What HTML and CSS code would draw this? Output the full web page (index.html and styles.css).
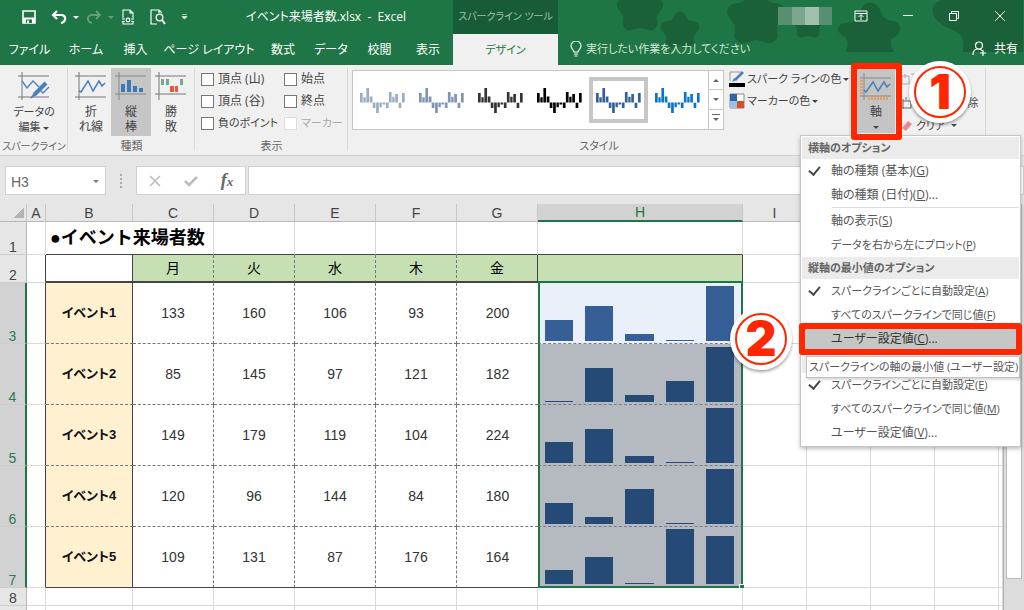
FILE: index.html
```html
<!DOCTYPE html>
<html lang="ja">
<head>
<meta charset="utf-8">
<title>イベント来場者数.xlsx - Excel</title>
<link rel="stylesheet" href="styles.css">
</head>
<body>
<svg class="defs" width="0" height="0" aria-hidden="true">
  <symbol id="star" viewBox="-50 -50 100 100"><path d="M0-34 14-14 34-10 20 8 22 28 0 22-22 28-20 8-34-10-14-14Z" fill="currentColor" stroke="currentColor" stroke-width="28" stroke-linejoin="round"/></symbol>
  <symbol id="winloss" viewBox="0 0 134 74"><path fill="currentColor" d="M0 15h8v28H0zM10 27h7v16h-7zM19 0h8v43h-8zM29 25h8v18h-8zM38 43h8v16h-8zM48 43h8v31h-8zM58 43h7v14h-7zM67 43h8v6h-8zM77 43h8v16h-8zM86 12h8v31h-8zM96 26h7v17h-7zM105 18h8v25h-8zM115 44h8v15h-8zM125 15h8v28h-8z"/></symbol>
</svg>
<div class="app">
  <header class="top">
    <svg class="pattern" width="574" height="65" viewBox="450 0 574 65" aria-hidden="true">
      <use href="#star" x="616" y="-14" width="48" height="48"/>
      <use href="#star" x="660" y="10" width="40" height="42"/>
      <use href="#star" x="723" y="-12" width="66" height="60"/>
      <use href="#star" x="790" y="8" width="36" height="32"/>
      <path d="M846 52c2-8 3-12-2-16-9-4-8-12 2-13 7 0 12-3 14-11 3-11 16-13 20-2 3 8 6 10 14 11 9 3 8 13-1 17-4 3-2 8 1 14z"/>
      <path d="M933 8c2-8 12-10 22-8h68v52h-60c0-10 2-16-8-21-14-6-24-12-22-23z"/>
    </svg>
    <div class="top-main">
      <div class="title-row">
        <div class="qat">
          <button class="single" aria-label="上書き保存"><svg width="14" height="14" viewBox="0 0 14 14"><path d="M1 1h12v12H1z" fill="none" stroke="#fff" stroke-width="1.6"/><path d="M1 7.500h12V13H1z" fill="#fff"/><path d="M4 9.500h6V13H4z" fill="#1e7545"/><path d="M5 10.500h2V13H5z" fill="#fff"/></svg></button>
          <button class="undo" aria-label="元に戻す"><svg width="16" height="14" viewBox="0 0 16 14"><path d="M2 5h8c6 0 5 7 0 8M6 1 2 5l4 4" fill="none" stroke="#fff" stroke-width="2.200"/></svg><i class="caret"></i></button>
          <button class="undo off" aria-label="やり直し"><svg width="16" height="14" viewBox="0 0 16 14"><path d="M14 5H6c-6 0-5 7 0 8M10 1l4 4-4 4" fill="none" stroke="#fff" stroke-width="1.800"/></svg><i class="caret"></i></button>
          <button class="single" aria-label="クイック印刷"><svg width="14" height="16" viewBox="0 0 14 16"><path d="M2 9V1h7l3 3v5M9 1v3h3M2 13v2h10v-2" fill="none" stroke="#fff" stroke-width="1.100"/><path d="M1 10h3M1 12.500h3M10 10h3M10 12.500h3" stroke="#fff"/><circle cx="7" cy="11" r="1.800" fill="none" stroke="#fff" stroke-width="1.200"/></svg></button>
          <button class="single" aria-label="印刷プレビュー"><svg width="16" height="16" viewBox="0 0 16 16"><path d="M7 15H1V1h8l3 3M9 1v3" fill="none" stroke="#fff" stroke-width="1.200"/><circle cx="9.500" cy="8.500" r="3.300" fill="none" stroke="#fff" stroke-width="1.300"/><path d="m12 11 3 4" stroke="#fff" stroke-width="2"/></svg></button>
          <button aria-label="カスタマイズ"><svg width="7" height="6" viewBox="0 0 7 6"><path d="M1 .5h5M1 2.500h5L3.500 5z" fill="#fff" stroke="#fff" stroke-width=".6"/></svg></button>
        </div>
        <h1>イベント来場者数.xlsx&nbsp; -&nbsp; Excel</h1>
      </div>
      <nav class="tabs"><button>ファイル</button><button>ホーム</button><button>挿入</button><button>ページ レイアウト</button><button>数式</button><button>データ</button><button>校閲</button><button>表示</button></nav>
    </div>
    <div class="context">
      <div class="context-title">スパークライン ツール</div>
      <button class="context-tab">デザイン</button>
    </div>
    <div class="top-side">
      <div class="window-row">
        <div class="user" aria-hidden="true"><i></i><i></i><i></i><i></i></div>
        <button aria-label="リボンの表示オプション"><svg width="14" height="12" viewBox="0 0 14 12"><path d="M1 1h12v10H1zM1 3.500h12M7 10V5M4.500 7 7 4.500 9.500 7" fill="none" stroke="#fff"/></svg></button>
        <button aria-label="最小化"><svg width="12" height="12" viewBox="0 0 12 12"><path d="M1 5.500h10" stroke="#fff"/></svg></button>
        <button aria-label="元に戻す (縮小)"><svg width="12" height="12" viewBox="0 0 12 12"><path d="M1.500 3.500h7v7h-7zM3.500 3.500v-2h7v7h-2" fill="none" stroke="#fff"/></svg></button>
        <button aria-label="閉じる"><svg width="12" height="12" viewBox="0 0 12 12"><path d="m1 1 10 10M11 1 1 11" stroke="#fff"/></svg></button>
      </div>
      <div class="tell-row">
        <button class="tell"><svg width="12" height="16" viewBox="0 0 12 16"><path d="M4 11c0-2-3-3-3-6a5 5 0 0 1 10 0c0 3-3 4-3 6zM4 13h4M4.500 15h3" fill="none" stroke="#fff" stroke-width="1.100"/></svg>実行したい作業を入力してください</button>
        <button class="share"><svg width="15" height="15" viewBox="0 0 15 15"><circle cx="7" cy="4.500" r="3.500" fill="none" stroke="#fff" stroke-width="1.200"/><path d="M1 14c0-4 2-6 5-6 2 0 3 .5 4 1.500M8 12h6M11 9v6" fill="none" stroke="#fff" stroke-width="1.200"/></svg>共有</button>
      </div>
    </div>
  </header>

  <section class="ribbon">
    <div class="group g-data">
      <div class="body">
        <button class="big"><svg width="32" height="30" viewBox="0 0 32 30"><path d="M0 4h31M4 0v28M0 25h31" stroke="#777" fill="none"/><path d="m4 9 5 7 6-7 6 6M22 18l3 3 6-6" fill="none" stroke="#4a7fbd" stroke-width="1.300"/><path d="m28 11-11 11" stroke="#4a7fbd" stroke-width="4"/><path d="m16 20 3 3-7 4z" fill="#4a7fbd"/></svg><span>データの<br>編集 <i class="caret"></i></span></button>
      </div>
      <h2>スパークライン</h2>
    </div>
    <div class="group g-type">
      <div class="body">
        <button class="big"><svg width="32" height="30" viewBox="0 0 32 30"><path d="M0 4h31M4 0v28M0 25h31" stroke="#777" fill="none"/><path d="m4 19 2 1 7-11 5 10 6-10 3 5 3-3" fill="none" stroke="#4a7fbd" stroke-width="1.500"/></svg><span>折<br>れ線</span></button>
        <button class="big on"><svg width="32" height="30" viewBox="0 0 32 30"><path d="M0 4h31M4 0v28M0 22h31" stroke="#888" fill="none"/><path d="M6 12h4v8H6zM12 8h4v12h-4zM18 14h4v6h-4zM24 16h4v4h-4z" fill="#3f78b8"/></svg><span>縦<br>棒</span></button>
        <button class="big"><svg width="32" height="30" viewBox="0 0 32 30"><path d="M0 4h31M4 0v28M0 22h31" stroke="#777" fill="none"/><path d="M6 7h3v6H6zM11 7h3v6h-3zM25 7h3v6h-3z" fill="#74a98a"/><path d="M15 14h4v6h-4zM20 14h3v6h-3z" fill="#e8593f"/></svg><span>勝<br>敗</span></button>
      </div>
      <h2>種類</h2>
    </div>
    <div class="group g-show">
      <div class="body checks">
        <label><input type="checkbox">頂点 (山)</label><label><input type="checkbox">始点</label>
        <label><input type="checkbox">頂点 (谷)</label><label><input type="checkbox">終点</label>
        <label class="kana"><input type="checkbox">負のポイント</label><label class="kana off"><input type="checkbox" disabled>マーカー</label>
      </div>
      <h2>表示</h2>
    </div>
    <div class="group g-style">
      <div class="body">
        <div class="gallery">
          <div class="thumbs">
            <button class="s1" aria-label="スタイル 1"><svg width="45" height="25"><use href="#winloss"/></svg></button>
            <button class="s2" aria-label="スタイル 2"><svg width="45" height="25"><use href="#winloss"/></svg></button>
            <button class="s3" aria-label="スタイル 3"><svg width="45" height="25"><use href="#winloss"/></svg></button>
            <button class="s4" aria-label="スタイル 4"><svg width="45" height="25"><use href="#winloss"/></svg></button>
            <button class="s5 picked" aria-label="スタイル 5"><svg width="45" height="25"><use href="#winloss"/></svg></button>
            <button class="s6" aria-label="スタイル 6"><svg width="45" height="25"><use href="#winloss"/></svg></button>
          </div>
          <div class="spin"><button aria-label="上へ"><i class="caret up"></i></button><button aria-label="下へ"><i class="caret"></i></button><button aria-label="その他"><i class="caret more"></i></button></div>
        </div>
        <div class="colors">
          <button><svg width="16" height="16" viewBox="0 0 16 16"><path d="M1 10V1h11" fill="none" stroke="#999"/><path d="M0 12h16v4H0z" fill="#000"/><path d="m14 1-8 8" stroke="#4a7fbd" stroke-width="2.500"/><path d="m3 11 2-4 2 2z" fill="#4a7fbd"/></svg>スパーク ラインの色<i class="caret"></i></button>
          <button><svg width="16" height="16" viewBox="0 0 16 16"><path d="M1 1h14v14H1z" fill="#fff" stroke="#888"/><path d="M1 1h7v7H1z" fill="#2f65a5"/><path d="M1 8h7v7H1z" fill="#9cbfe6"/><path d="M8 8h7v7H8z" fill="#d2502a"/></svg>マーカーの色<i class="caret"></i></button>
        </div>
      </div>
      <h2>スタイル</h2>
    </div>
    <div class="group g-axis">
      <div class="body">
        <button class="big axis"><svg width="32" height="28" viewBox="0 0 32 28"><path d="M0 5h31M4 0v27M0 23h31" stroke="#888" fill="none"/><path d="m4 17 2 2 7-10 5 9 6-9 3 5 3-3" fill="none" stroke="#4a7fbd" stroke-width="1.500"/><path d="M1.500 7v14M8 25.500h20" stroke="#f09a4a" stroke-width="2.500" stroke-dasharray="2 1"/></svg><span>軸</span><i class="caret"></i></button>
        <div class="grouping">
          <button class="off"><svg width="13" height="14" viewBox="0 0 13 14"><path d="M1 3h7v8H1zM4 1v4M10 1h3M10 12h3" fill="none" stroke="#aaa"/></svg>グループ化</button>
          <button><svg width="13" height="14" viewBox="0 0 13 14"><path d="M2 5h8v7H2zM0 4h3M5 1v3M9 4h4M2 13v-2" fill="none" stroke="#666"/></svg>グループ解除</button>
          <button><svg width="13" height="14" viewBox="0 0 13 14"><path d="m1 9 6-7 4 3-6 7z" fill="#ea8791"/></svg>クリア<i class="caret"></i></button>
        </div>
      </div>
    </div>
  </section>

  <section class="formula">
    <div class="namebox"><input aria-label="名前ボックス" value="H3"><button aria-label="名前の一覧"><i class="caret"></i></button></div>
    <span class="grip" aria-hidden="true"><i></i><i></i><i></i><i></i></span>
    <div class="fx">
      <button aria-label="キャンセル"><svg width="12" height="12" viewBox="0 0 12 12"><path d="m1 1 10 10M11 1 1 11" stroke="#bbb" stroke-width="1.500"/></svg></button>
      <button aria-label="入力"><svg width="14" height="12" viewBox="0 0 14 12"><path d="m1 6 4 4 8-8" fill="none" stroke="#bbb" stroke-width="2.500"/></svg></button>
      <button class="fn" aria-label="関数の挿入"><em>f<small>x</small></em></button>
    </div>
    <input class="bar-input" aria-label="数式バー">
  </section>

  <main class="sheet">
    <div class="grid">
      <table>
        <colgroup><col class="c-row"><col class="c-a"><col class="c-b"><col class="c-day"><col class="c-day"><col class="c-day"><col class="c-day"><col class="c-day"><col class="c-h"><col class="c-std"><col class="c-std"><col class="c-std"><col class="c-std"><col></colgroup>
        <thead><tr><th class="corner"></th><th>A</th><th>B</th><th>C</th><th>D</th><th>E</th><th>F</th><th>G</th><th class="sel">H</th><th>I</th><th>J</th><th>K</th><th>L</th><th></th></tr></thead>
        <tbody>
          <tr class="r-title"><th>1</th><td></td><td colspan="2" class="ink title">●イベント来場者数</td><td class="ink"></td><td class="ink"></td><td class="ink"></td><td class="ink"></td><td class="ink"></td><td></td><td></td><td></td><td></td><td></td></tr>
          <tr class="r-days"><th>2</th><td class="edge"></td><td class="blank"></td><td class="day">月</td><td class="day">火</td><td class="day">水</td><td class="day">木</td><td class="day last">金</td><td class="day target"></td><td></td><td></td><td></td><td></td><td></td></tr>
          <tr class="r-data"><th>3</th><td class="edge"></td><td class="name">イベント1</td><td>133</td><td>160</td><td>106</td><td>93</td><td>200</td><td class="spark active"><div class="bars"><i style="height:21px"></i><i style="height:35px"></i><i style="height:7px"></i><i style="height:1px"></i><i style="height:55px"></i></div></td><td></td><td></td><td></td><td></td><td></td></tr>
          <tr class="r-data"><th>4</th><td class="edge"></td><td class="name">イベント2</td><td>85</td><td>145</td><td>97</td><td>121</td><td>182</td><td class="spark"><div class="bars"><i style="height:1px"></i><i style="height:34px"></i><i style="height:7px"></i><i style="height:21px"></i><i style="height:55px"></i></div></td><td></td><td></td><td></td><td></td><td></td></tr>
          <tr class="r-data"><th>5</th><td class="edge"></td><td class="name">イベント3</td><td>149</td><td>179</td><td>119</td><td>104</td><td>224</td><td class="spark"><div class="bars"><i style="height:21px"></i><i style="height:34px"></i><i style="height:7px"></i><i style="height:1px"></i><i style="height:55px"></i></div></td><td></td><td></td><td></td><td></td><td></td></tr>
          <tr class="r-data"><th>6</th><td class="edge"></td><td class="name">イベント4</td><td>120</td><td>96</td><td>144</td><td>84</td><td>180</td><td class="spark"><div class="bars"><i style="height:21px"></i><i style="height:7px"></i><i style="height:35px"></i><i style="height:1px"></i><i style="height:55px"></i></div></td><td></td><td></td><td></td><td></td><td></td></tr>
          <tr class="r-data end"><th>7</th><td class="edge"></td><td class="name">イベント5</td><td>109</td><td>131</td><td>87</td><td>176</td><td>164</td><td class="spark"><div class="bars"><i style="height:14px"></i><i style="height:27px"></i><i style="height:1px"></i><i style="height:55px"></i><i style="height:48px"></i></div><b class="handle"></b></td><td></td><td></td><td></td><td></td><td></td></tr>
          <tr class="r-std"><th>8</th><td></td><td></td><td></td><td></td><td></td><td></td><td></td><td></td><td></td><td></td><td></td><td></td><td></td></tr>
          <tr class="r-std"><th>9</th><td></td><td></td><td></td><td></td><td></td><td></td><td></td><td></td><td></td><td></td><td></td><td></td><td></td></tr>
        </tbody>
      </table>
    </div>
    <div class="scroll"><div class="thumb"></div></div>
  </main>

  <div class="menu" role="menu">
    <h3>横軸のオプション</h3>
    <button class="checked">軸の種類 (基本)(<u>G</u>)</button>
    <button>軸の種類 (日付)(<u>D</u>)...</button>
    <hr>
    <button>軸の表示(<u>S</u>)</button>
    <button class="kana">データを右から左にプロット(<u>P</u>)</button>
    <h3>縦軸の最小値のオプション</h3>
    <button class="kana checked">スパークラインごとに自動設定(<u>A</u>)</button>
    <button class="kana">すべてのスパークラインで同じ値(<u>F</u>)</button>
    <button class="hot">ユーザー設定値(<u>C</u>)...</button>
    <h3></h3>
    <button class="kana checked">スパークラインごとに自動設定(<u>E</u>)</button>
    <button class="kana">すべてのスパークラインで同じ値(<u>M</u>)</button>
    <button>ユーザー設定値(<u>V</u>)...</button>
    <div class="tip" role="tooltip">スパークラインの軸の最小値 (ユーザー設定)</div>
  </div>
  <div class="badge one"><span>1</span></div>
  <div class="badge two"><span>2</span></div>
</div>
</body>
</html>
```

FILE: styles.css
```css
* { box-sizing: border-box; }
body {
  margin: 0;
  font: 12px/16px "Open Sans", "Noto Sans CJK JP", sans-serif;
  font-feature-settings: "palt";
  color: #444;
}
button, input { font: inherit; color: inherit; font-feature-settings: inherit; }
button { border: 0; padding: 0; background: none; white-space: nowrap; }
h1, h2, h3 { margin: 0; font-size: 12px; font-weight: 400; }
svg { display: block; flex: none; }
.kana { font-size: 11px; }
.defs { position: absolute; }
.app { position: relative; display: flex; flex-direction: column; height: 100vh; overflow: hidden; background: #e6e6e6; }

.caret { display: inline-block; flex: none; border: 3px solid transparent; border-top-color: currentColor; border-bottom: 0; vertical-align: middle; }
.caret.up { border-top: 0; border-bottom: 3px solid currentColor; }
.caret.more { position: relative; }
.caret.more::before { content: ""; position: absolute; left: -4px; top: -7px; width: 8px; height: 1px; background: currentColor; }

/* title bar and tabs */
.top { position: relative; display: flex; height: 65px; flex: none; background: #1e7545; color: #fff; }
.pattern { position: absolute; right: 0; top: 0; fill: #1a613a; color: #1a613a; }
.top-main { width: 453px; }
.title-row { display: flex; align-items: center; height: 34px; padding-left: 22px; }
.qat { display: flex; align-items: center; gap: 7px; width: 224px; }
.qat button { display: flex; align-items: center; gap: 6px; }
.qat .single { margin-right: 8px; }
.undo.off { opacity: .3; }
h1 { white-space: nowrap; }
.tabs { display: grid; grid-template-columns: 59px 54px 45px 102px 46px 50px 47px 50px; height: 31px; }
.context { position: relative; width: 105px; display: flex; flex-direction: column; }
.context-title { height: 34px; line-height: 32px; text-align: center; background: #185c37; color: #9fc3ae; white-space: nowrap; font-size: 10px; }
.context-tab { flex: 1; background: #f0f0f0; color: #1e7545; font-size: 11px; }
.top-side { position: relative; flex: 1; }
.window-row { display: flex; align-items: center; justify-content: flex-end; gap: 34px; height: 32px; padding-right: 18px; }
.user { display: flex; width: 54px; height: 18px; margin-right: -12px; }
.user i { flex: 1; background: #588f70; }
.user i:nth-child(2) { background: #79a68d; }
.user i:nth-child(3) { background: #9fc0ac; }
.tell-row { display: flex; justify-content: space-between; height: 33px; padding: 0 6px 0 12px; }
.tell, .share { display: flex; align-items: center; gap: 4px; }
.tell { color: #d5e6db; font-size: 11px; }
.share { gap: 7px; }

/* ribbon */
.ribbon { display: flex; flex: none; height: 91px; background: #f0f0f0; border-bottom: 1px solid #d2d2d2; }
.group { position: relative; flex: none; padding-top: 3px; }
.group::after { content: ""; position: absolute; right: 0; top: 3px; bottom: 4px; width: 1px; background: #dadada; }
.group h2 { text-align: center; color: #666; white-space: nowrap; line-height: 20px; font-size: 11px; }
.body { display: flex; height: 68px; }
.g-data { width: 68px; }
.group.g-data h2 { font-size: 10px; }
.g-type { width: 127px; }
.g-show { width: 153px; }
.group.g-style { flex: 1; min-width: 0; }
.g-axis { width: 136px; margin-right: 38px; }
.g-type .body { padding-left: 3px; }
.g-data .body { justify-content: center; }
.big { display: flex; flex-direction: column; align-items: center; gap: 2px; width: 40px; height: 68px; padding-top: 4px; line-height: 15px; }
.g-data .big { width: 60px; font-size: 11px; }
.big.on { background: #c6c6c6; }
.checks { display: grid; grid-template-columns: 83px 1fr; grid-auto-rows: 22px; padding-left: 6px; }
.checks label { display: flex; align-items: center; gap: 4px; white-space: nowrap; }
.checks input { appearance: none; flex: none; width: 13px; height: 13px; margin: 0; border: 1px solid #777; background: #fff; }
.checks .off { color: #aaa; }
.checks .off input { border-color: #ddd; }
.gallery { display: flex; flex: none; width: 372px; height: 60px; margin: 2px 0 0 4px; border: 1px solid #c6c6c6; background: #fff; }
.thumbs { display: grid; grid-template-columns: repeat(6, 59px); flex: 1; align-items: center; }
.thumbs button { display: grid; place-items: center; height: 46px; }
.picked { outline: 4px solid #c6c6c6; outline-offset: -4px; }
.s1 { color: #9aabc2; }
.s2 { color: #7f93b3; }
.s3 { color: #333; }
.s4 { color: #000; }
.s5 { color: #355f9b; }
.s6 { color: #0a74c8; }
.spin { display: grid; grid-template-rows: repeat(3, 1fr); width: 15px; color: #666; }
.spin button { display: grid; place-items: center; border-left: 1px solid #c6c6c6; border-bottom: 1px solid #c6c6c6; }
.spin button:last-child { border-bottom: 0; }
.colors { padding: 0 0 0 5px; font-size: 11px; }
.colors button { display: flex; align-items: center; gap: 2px; height: 22px; }
.g-axis .body { padding-left: 7px; }
.axis { position: relative; z-index: 4; width: 38px; height: 64px; margin-top: 1px; gap: 3px; background: #c4c4c4; }
.axis .caret { margin-top: 4px; }
.axis::after { content: ""; position: absolute; inset: -6px -7px -7px -6px; border: 6px solid #ff2600; border-radius: 3px; }
.grouping { padding-left: 6px; font-size: 11px; }
.grouping button { display: flex; align-items: center; gap: 2px; height: 23px; }
.grouping .off { color: #aaa; }
.grouping .caret { margin-left: 4px; }

/* formula bar */
.formula { display: flex; flex: none; height: 48px; padding: 10px 0 9px 5px; }
.namebox { display: flex; width: 101px; background: #fff; border: 1px solid #d0d0d0; }
.namebox input { flex: 1; min-width: 0; border: 0; padding: 2px 0 0 5px; font: 14px "Liberation Sans", sans-serif; background: none; color: #666; }
.namebox button { width: 18px; color: #777; }
.grip { display: grid; gap: 2px; align-content: center; width: 30px; justify-content: center; }
.grip i { width: 2px; height: 2px; background: #aaa; }
.fx { display: flex; width: 110px; background: #fff; border: 1px solid #d0d0d0; }
.fx button { flex: 1; display: grid; place-items: center; }
.fn em { font: italic bold 18px/20px "Liberation Serif", serif; color: #666; }
.fn small { font-size: 13px; }
.bar-input { flex: 1; min-width: 0; margin-left: 2px; border: 1px solid #d0d0d0; background: #fff; }

/* worksheet */
.sheet { display: flex; flex: 1; min-height: 0; overflow: hidden; }
.grid { flex: 1; min-width: 0; overflow: hidden; background: #fff; border-right: 1px solid #b0b0b0; }
table { width: 100%; table-layout: fixed; border-collapse: separate; border-spacing: 0; font-family: "Liberation Sans", "Noto Sans CJK JP", sans-serif; font-size: 14px; }
.c-row { width: 27px; }
.c-a { width: 19px; }
.c-b { width: 87px; }
.c-day { width: 81px; }
.c-h { width: 205px; }
.c-std { width: 64px; }
th, td { padding: 0; border-right: 1px solid #d9d9d9; border-bottom: 1px solid #d9d9d9; text-align: center; color: #333; }
th { font-weight: 400; background: #e6e6e6; border-color: #b8b8b8; color: #444; }
thead th { height: 18px; line-height: 16px; border-right-color: #c8c8c8; }
thead .sel { background: #d2d2d2; color: #1e7545; border-bottom: 2px solid #1e7545; }
.corner { background: linear-gradient(135deg, transparent 50%, #b4b4b4 50%) 14px 3px / 10px 11px no-repeat #e6e6e6; }
tbody th { vertical-align: bottom; line-height: 14px; border-bottom-color: #ccc; }
.r-title > * { height: 33px; }
.r-title .ink { border-bottom-color: #444; }
.r-title .title { padding-left: 4px; text-align: left; font-size: 18px; font-weight: 700; font-feature-settings: normal; color: #000; white-space: nowrap; line-height: 24px; }
.r-days > * { height: 28px; }
.edge { border-right-color: #444; }
.blank { border-color: #444; border-bottom-width: 2px; }
.day { background: #c6e0b4; color: #000; border-right: 1px dashed #777; border-bottom: 2px solid #444; }
.day.last { border-right: 1px solid #444; }
.day.target { border-right: 1px solid #444; border-bottom: 2px solid #1e7545; }
.r-data > * { height: 61px; }
.r-data th { background: #d2d2d2; color: #2c7b50; border-right: 2px solid #1e7545; }
.r-data td:nth-child(n+3):nth-child(-n+8) { border-bottom: 1px dashed #777; border-right: 1px dashed #777; }
.r-data .name:nth-child(3):nth-child(3) { background: #fff0cf; font-size: 13px; font-weight: 700; color: #111; border-right: 1px solid #444; }
.r-data td:nth-child(8):nth-child(8) { border-right: 0; }
.r-data.end td:nth-child(n+3):nth-child(-n+8) { border-bottom: 1px solid #444; }
.r-data .spark { position: relative; vertical-align: bottom; background: #b5bac0; border-left: 2px solid #1e7545; border-right: 2px solid #1e7545; border-bottom: 1px dashed #777b88; color: #254a75; }
.r-data .active { background: #eaf0fa; color: #355f96; }
.end .spark { border-bottom: 2px solid #1e7545; }
.bars { display: flex; align-items: flex-end; gap: 12px; height: 58px; padding: 0 7px 2px 5px; }
.bars i { flex: 1; background: currentColor; }
.handle { position: absolute; right: -3px; bottom: -2px; width: 5px; height: 4px; background: #1e7545; border-left: 1px solid #fff; border-top: 1px solid #fff; }
.r-std > * { height: 18px; }
.scroll { width: 20px; padding: 0 2px; background: #dcdcdc; }
.thumb { height: 375px; background: #fff; border: 1px solid #bbb; }

/* axis menu */
.menu { position: absolute; z-index: 3; right: 3px; top: 135px; width: 221px; padding: 1px; background: #fff; border: 1px solid #c6c6c6; box-shadow: 0 2px 4px rgba(0, 0, 0, .25); color: #555; }
.menu h3 { height: 22px; line-height: 21px; padding-left: 6px; background: #ebebeb; font-size: 11px; font-weight: 700; color: #666; }
.menu button { position: relative; display: block; width: 100%; height: 24px; padding-left: 29px; text-align: left; }
.menu hr { height: 1px; margin: 0 0 1px 30px; border: 0; background: #ddd; }
.checked::before { content: ""; position: absolute; left: 9px; top: 5px; width: 5px; height: 9px; border: solid #444; border-width: 0 2px 2px 0; rotate: 40deg; }
.menu .hot { background: #c6c6c6; color: #333; }
.hot::after { content: ""; position: absolute; inset: -4px -3px -4px -3px; border: 6px solid #ff2600; border-radius: 3px; }
.tip { position: absolute; left: 5px; right: 0; top: 220px; height: 22px; line-height: 20px; padding-left: 2px; background: #fff; border: 1px solid #c0c0c0; box-shadow: 1px 2px 2px rgba(0, 0, 0, .15); white-space: nowrap; font-size: 11px; }

/* numbered callouts */
.badge { position: absolute; z-index: 5; width: 62px; height: 62px; border-radius: 50%; background: #fff; box-shadow: 0 2px 3px rgba(0, 0, 0, .35); padding: 5px; color: #ff2600; }
.badge span { display: grid; place-items: center; height: 100%; border: 2px solid currentColor; border-radius: 50%; font: 900 48px/48px Inter, "Liberation Sans", sans-serif; }
.one { right: 53px; top: 61px; }
.two { right: 232px; top: 308px; }
```
